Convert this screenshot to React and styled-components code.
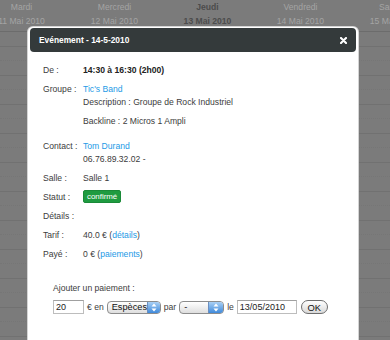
import React from 'react'
import styled, { createGlobalStyle } from 'styled-components'

const GlobalStyle = createGlobalStyle`
    html, body {
        margin: 0;
        padding: 0;
        height: 340px;
        overflow: hidden;
        background: #7b7b7b;
        font-family: "Liberation Sans", Arial, sans-serif;
    }
`;

const Calendar = styled.div`
    position: relative;
    height: 340px;
    overflow: hidden;
`;

const DayHeader = styled.div`
    display: flex;
    margin-left: -25px;
    height: 31px;
    border-bottom: 1px solid #6c6c6c;
`;

const DayCol = styled.div`
    flex: 0 0 93px;
    text-align: center;
    font-size: 8.6px;
    line-height: 14px;
    white-space: nowrap;
    color: ${p => (p.$today ? '#4c4c4c' : '#a4a4a4')};
    font-weight: ${p => (p.$today ? 700 : 400)};
`;

const Slot = styled.div`
    height: 13.5px;
    border-bottom: 1px ${p => (p.$half ? 'dotted #767676' : 'solid #717171')};
`;

const Dialog = styled.div`
    position: absolute;
    top: 27px;
    left: 28px;
    width: 326px;
    min-height: 330px;
    padding: 1px 2px;
    background: #fff;
    border-radius: 5px;
    box-shadow: 0 0 0 1px #d4d4d4;
`;

const TitleBar = styled.div`
    display: flex;
    align-items: center;
    justify-content: space-between;
    height: 24px;
    padding: 0 9px;
    background: #343a3b;
    border-radius: 4px;
    color: #fff;
    font-size: 8.4px;
    font-weight: 700;
`;

const CloseIcon = () => (
    <svg width="7" height="7" viewBox="0 0 7 7">
        <path d="M1 1 L6 6 M6 1 L1 6" stroke="#fff" strokeWidth="2.1" strokeLinecap="round" />
    </svg>
);

const Content = styled.div`
    padding: 12px 0 0 13px;
    font-size: 8.6px;
    color: #3c3c3c;
`;

const Row = styled.div`
    display: grid;
    grid-template-columns: 40px 1fr;
    line-height: 13px;
    margin-bottom: 6px;
`;

const Strong = styled.span`
    font-weight: 700;
    color: #222;
`;

const Link = styled.a`
    color: #1d9ae6;
    text-decoration: none;
`;

const Para = styled.div`
    margin: ${p => (p.$spaced ? '6px 0' : '0')};
`;

const Badge = styled.span`
    display: inline-block;
    vertical-align: top;
    margin-top: -1px;
    height: 11px;
    line-height: 11px;
    padding: 0 3px;
    border-radius: 2px;
    background: #1f9b40;
    border: 1px solid #1a8a38;
    color: #fff;
    font-size: 7.9px;
`;

const Payment = styled.div`
    margin-top: 21px;
    padding-left: 10px;
`;

const PayLabel = styled.div`
    line-height: 13px;
`;

const FormRow = styled.div`
    display: flex;
    align-items: center;
    gap: 3px;
    height: 14px;
    margin-top: 5px;
`;

const TextInput = styled.input`
    box-sizing: border-box;
    width: ${p => p.$w}px;
    height: 14px;
    padding: 0 2px;
    border: 1px solid #bdbdbd;
    border-top-color: #a0a0a0;
    font-family: "Liberation Sans", Arial, sans-serif;
    font-size: 9px;
    color: #222;
    outline: none;
`;

const FakeSelect = styled.div`
    box-sizing: border-box;
    display: flex;
    align-items: center;
    width: ${p => p.$w}px;
    height: 13px;
    padding-left: 4px;
    border: 1px solid #8c8c8c;
    border-radius: 4px;
    background: linear-gradient(#ffffff, #dedede);
    font-size: 9.2px;
    color: #111;
    overflow: hidden;
`;

const SelectArrows = styled.span`
    display: flex;
    align-items: center;
    justify-content: center;
    margin-left: auto;
    width: 14px;
    height: 100%;
    background: linear-gradient(#a9d0f5, #3f89da);
    border-left: 1px solid #6b8fc0;
`;

const Arrows = () => (
    <svg width="6" height="9" viewBox="0 0 6 9">
        <path d="M3 0.5 L5.5 3.5 L0.5 3.5 Z M3 8.5 L5.5 5.5 L0.5 5.5 Z" fill="#fff" />
    </svg>
);

const OkButton = styled.button`
    box-sizing: border-box;
    height: 14px;
    width: 27px;
    padding: 0;
    margin-left: 1px;
    border: 1px solid #6e6e6e;
    border-radius: 8px;
    background: linear-gradient(#ffffff, #d9d9d9);
    font-family: "Liberation Sans", Arial, sans-serif;
    font-size: 9.4px;
    color: #111;
`;

const days = [
    ['Mardi', '11 Mai 2010'],
    ['Mercredi', '12 Mai 2010'],
    ['Jeudi', '13 Mai 2010', true],
    ['Vendredi', '14 Mai 2010'],
    ['Samedi', '15 Mai 2010'],
];

export default function App() {
    return (
        <>
            <GlobalStyle />
            <Calendar>
                <DayHeader>
                    {days.map(([name, date, today]) => (
                        <DayCol key={name} $today={today}>
                            <div>{name}</div>
                            <div>{date}</div>
                        </DayCol>
                    ))}
                </DayHeader>
                {Array.from({ length: 22 }).map((_, i) => (
                    <Slot key={i} $half={i % 2 === 1} />
                ))}

                <Dialog>
                    <TitleBar>
                        <span>Evénement - 14-5-2010</span>
                        <CloseIcon />
                    </TitleBar>
                    <Content>
                        <Row>
                            <span>De :</span>
                            <Strong>14:30 à 16:30 (2h00)</Strong>
                        </Row>
                        <Row>
                            <span>Groupe :</span>
                            <div>
                                <Para><Link href="#">Tic's Band</Link></Para>
                                <Para>Description : Groupe de Rock Industriel</Para>
                                <Para $spaced>Backline : 2 Micros 1 Ampli</Para>
                            </div>
                        </Row>
                        <Row>
                            <span>Contact :</span>
                            <div>
                                <Para><Link href="#">Tom Durand</Link></Para>
                                <Para>06.76.89.32.02 -</Para>
                            </div>
                        </Row>
                        <Row>
                            <span>Salle :</span>
                            <span>Salle 1</span>
                        </Row>
                        <Row>
                            <span>Statut :</span>
                            <div><Badge>confirmé</Badge></div>
                        </Row>
                        <Row>
                            <span>Détails :</span>
                            <span />
                        </Row>
                        <Row>
                            <span>Tarif :</span>
                            <span>40.0 € (<Link href="#">détails</Link>)</span>
                        </Row>
                        <Row>
                            <span>Payé :</span>
                            <span>0 € (<Link href="#">paiements</Link>)</span>
                        </Row>

                        <Payment>
                            <PayLabel>Ajouter un paiement :</PayLabel>
                            <FormRow>
                                <TextInput $w={31} value="20" readOnly />
                                <span>€ en</span>
                                <FakeSelect $w={54}>
                                    Espèces
                                    <SelectArrows><Arrows /></SelectArrows>
                                </FakeSelect>
                                <span>par</span>
                                <FakeSelect $w={45}>
                                    -
                                    <SelectArrows><Arrows /></SelectArrows>
                                </FakeSelect>
                                <span>le</span>
                                <TextInput $w={60} value="13/05/2010" readOnly />
                                <OkButton>OK</OkButton>
                            </FormRow>
                        </Payment>
                    </Content>
                </Dialog>
            </Calendar>
        </>
    )
}
